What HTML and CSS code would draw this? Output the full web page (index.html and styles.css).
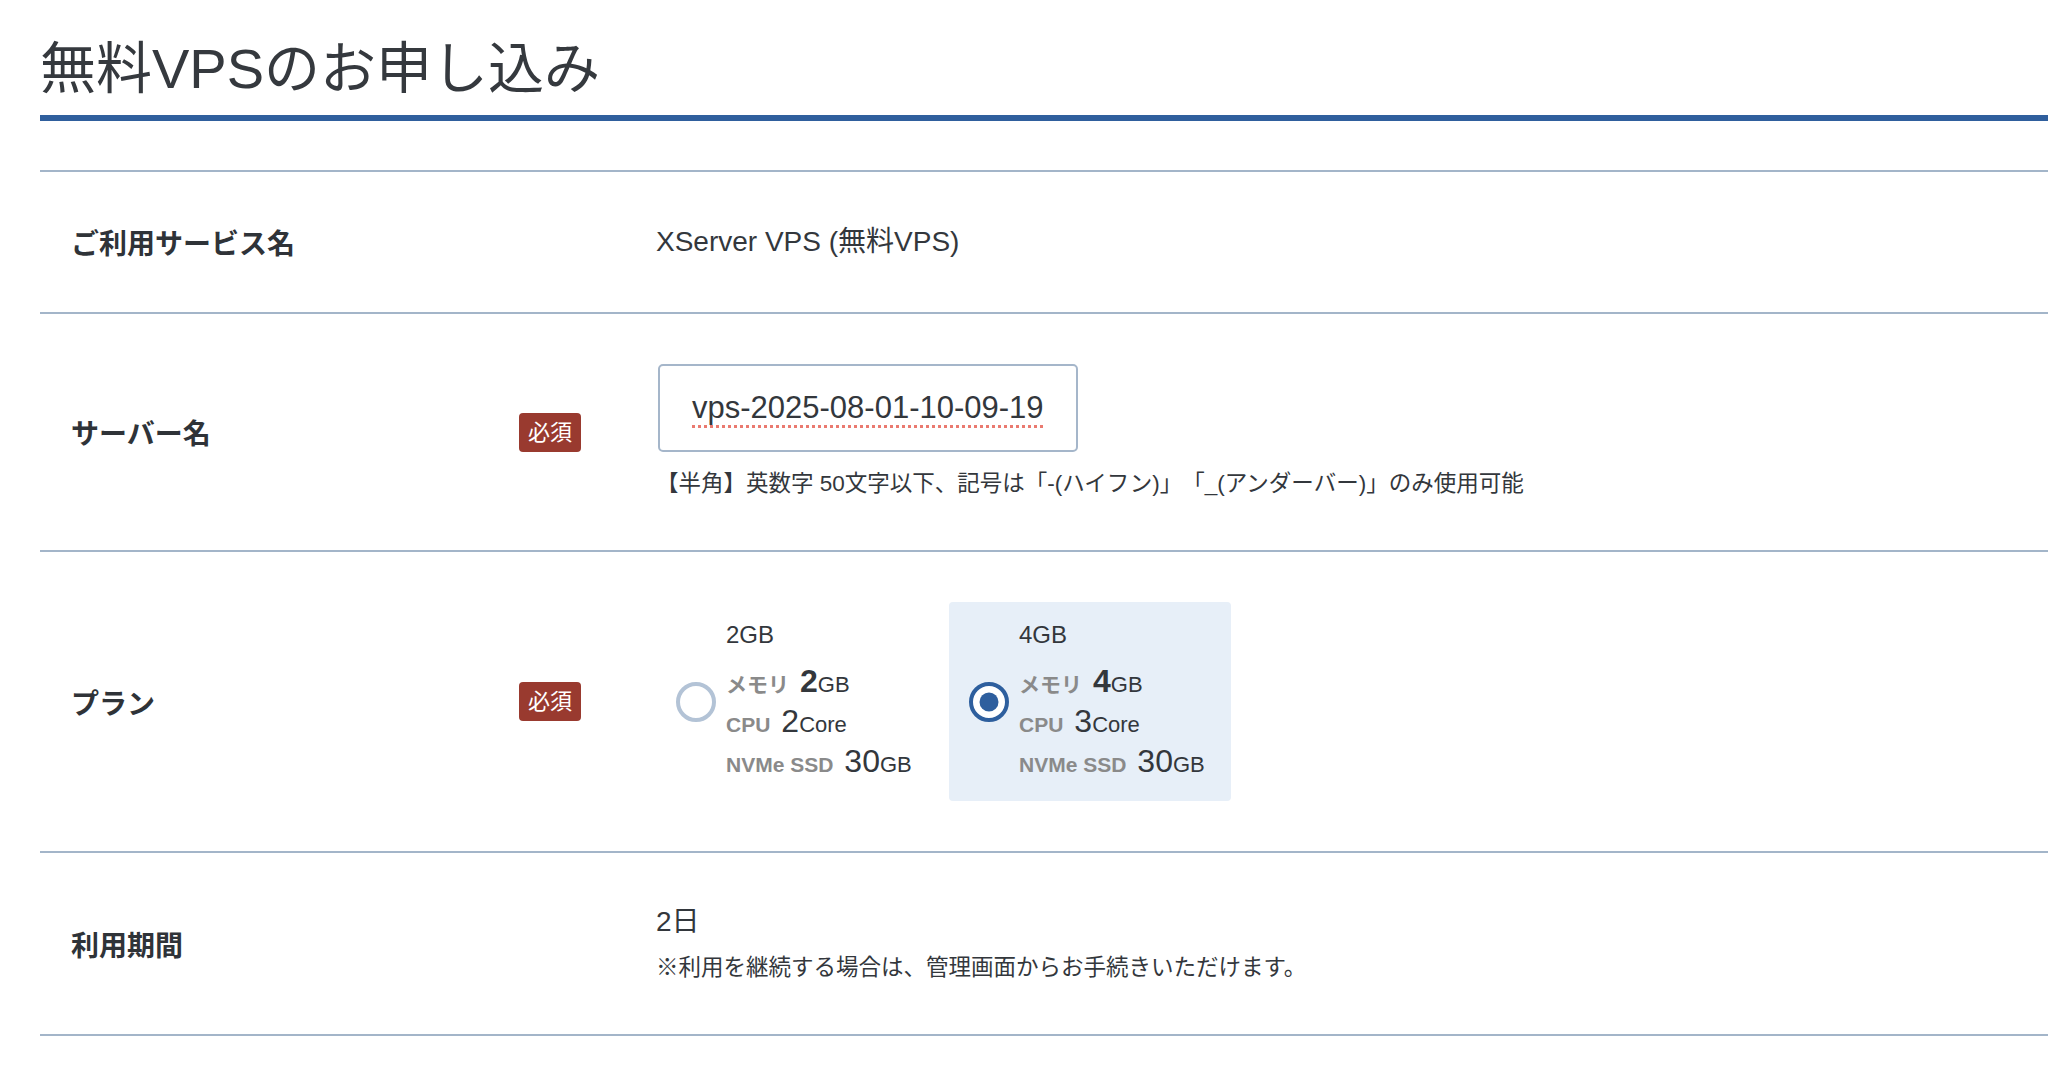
FILE: index.html
```html
<!DOCTYPE html>
<html lang="ja">
<head>
    <meta charset="UTF-8">
    <meta name="viewport" content="width=device-width, initial-scale=1.0">
    <title>無料VPSのお申し込み</title>
    <link rel="stylesheet" href="styles.css">
</head>
<body>
    <div class="page">
        <h1 class="page-title">無料VPSのお申し込み</h1>

        <div class="form-table">
            <div class="form-row">
                <div class="form-label">
                    <span>ご利用サービス名</span>
                </div>
                <div class="form-value">
                    <p class="value-text">XServer VPS (無料VPS)</p>
                </div>
            </div>

            <div class="form-row">
                <div class="form-label">
                    <span>サーバー名</span>
                    <span class="required">必須</span>
                </div>
                <div class="form-value">
                    <div class="text-input" contenteditable="true" spellcheck="true"><span class="misspelled">vps-2025-08-01-10-09-19</span></div>
                    <p class="note note-input">【半角】英数字 50文字以下、記号は「-(ハイフン)」「_(アンダーバー)」のみ使用可能</p>
                </div>
            </div>

            <div class="form-row">
                <div class="form-label">
                    <span>プラン</span>
                    <span class="required">必須</span>
                </div>
                <div class="form-value">
                    <div class="plan-list">
                        <label class="plan">
                            <span class="radio"></span>
                            <span class="plan-body">
                                <span class="plan-name">2GB</span>
                                <span class="spec spec-first"><span class="spec-label">メモリ</span><b class="spec-num">2</b><span class="spec-unit">GB</span></span>
                                <span class="spec"><span class="spec-label">CPU</span><span class="spec-num">2</span><span class="spec-unit">Core</span></span>
                                <span class="spec"><span class="spec-label">NVMe SSD</span><span class="spec-num">30</span><span class="spec-unit">GB</span></span>
                            </span>
                        </label>
                        <label class="plan selected">
                            <span class="radio"></span>
                            <span class="plan-body">
                                <span class="plan-name">4GB</span>
                                <span class="spec spec-first"><span class="spec-label">メモリ</span><b class="spec-num">4</b><span class="spec-unit">GB</span></span>
                                <span class="spec"><span class="spec-label">CPU</span><span class="spec-num">3</span><span class="spec-unit">Core</span></span>
                                <span class="spec"><span class="spec-label">NVMe SSD</span><span class="spec-num">30</span><span class="spec-unit">GB</span></span>
                            </span>
                        </label>
                    </div>
                </div>
            </div>

            <div class="form-row">
                <div class="form-label">
                    <span>利用期間</span>
                </div>
                <div class="form-value">
                    <p class="value-text period">2日</p>
                    <p class="note note-period">※利用を継続する場合は、管理画面からお手続きいただけます。</p>
                </div>
            </div>
        </div>
    </div>
</body>
</html>
```

FILE: styles.css
```css
body {
    margin: 0;
    background-color: #fff;
    color: #33373c;
    font-family: "Liberation Sans", "Noto Sans CJK JP", sans-serif;
    text-spacing-trim: space-all;
}
p {
    margin: 0;
}
.page {
    padding: 0 8px 0 40px;
}
.page-title {
    margin: 0;
    padding: 35px 0 13px;
    font-size: 56px;
    font-weight: 400;
    line-height: 67px;
    color: #35393e;
    border-bottom: 6px solid #2f5f9d;
}
.form-table {
    margin-top: 49px;
    border-top: 2px solid #a3b5c9;
}
.form-row {
    display: flex;
    border-bottom: 2px solid #a3b5c9;
}
.form-label {
    width: 616px;
    flex: none;
    box-sizing: border-box;
    padding: 0 75px 0 31px;
    display: flex;
    justify-content: space-between;
    align-items: center;
    font-size: 28px;
    font-weight: 700;
    color: #2f3338;
}
.required {
    background-color: #993a2f;
    color: #fff;
    font-size: 22px;
    font-weight: 400;
    line-height: 39px;
    padding: 0 9px;
    border-radius: 4px;
}
.form-value {
    padding: 50px 0;
    flex: 1;
}
.value-text {
    font-size: 28px;
    line-height: 40px;
}
.period {
    line-height: 38px;
}
.note {
    font-size: 22.5px;
    line-height: 33px;
    color: #33373c;
}
.note-input {
    margin-top: 15px;
}
.note-period {
    margin-top: 10px;
}
.text-input {
    width: 420px;
    height: 88px;
    box-sizing: border-box;
    margin-left: 2px;
    padding: 0 32px;
    border: 2px solid #a5b6ca;
    border-radius: 5px;
    font-family: "Liberation Sans", sans-serif;
    font-size: 31px;
    line-height: 84px;
    color: #33373c;
    white-space: nowrap;
    overflow: hidden;
    outline: none;
}
.misspelled {
    text-decoration: underline dotted #ea7a70 3px;
    text-underline-offset: 7px;
}
.plan-list {
    display: flex;
    gap: 11px;
}
.plan {
    width: 282px;
    box-sizing: border-box;
    padding: 18px 20px 18px 20px;
    display: flex;
    align-items: center;
    gap: 10px;
    border-radius: 4px;
    cursor: pointer;
}
.plan.selected {
    background-color: #e7eff8;
}
.radio {
    width: 40px;
    height: 40px;
    flex: none;
    box-sizing: border-box;
    border: 4px solid #b3c3d6;
    border-radius: 50%;
    background-color: #fff;
    position: relative;
}
.plan.selected .radio {
    border-color: #2e5f9e;
}
.plan.selected .radio::after {
    content: "";
    position: absolute;
    top: 50%;
    left: 50%;
    width: 19px;
    height: 19px;
    border-radius: 50%;
    background-color: #2e5f9e;
    transform: translate(-50%, -50%);
}
.plan-body {
    display: flex;
    flex-direction: column;
}
.plan-name {
    font-size: 24px;
    line-height: 30px;
}
.spec {
    display: flex;
    align-items: baseline;
    height: 40px;
    line-height: 36px;
}
.spec-first {
    margin-top: 13px;
}
.spec-label {
    font-size: 21px;
    font-weight: 700;
    color: #8a8a8a;
    margin-right: 11px;
}
.spec-num {
    font-size: 32px;
}
.spec-unit {
    font-size: 22px;
}
```
